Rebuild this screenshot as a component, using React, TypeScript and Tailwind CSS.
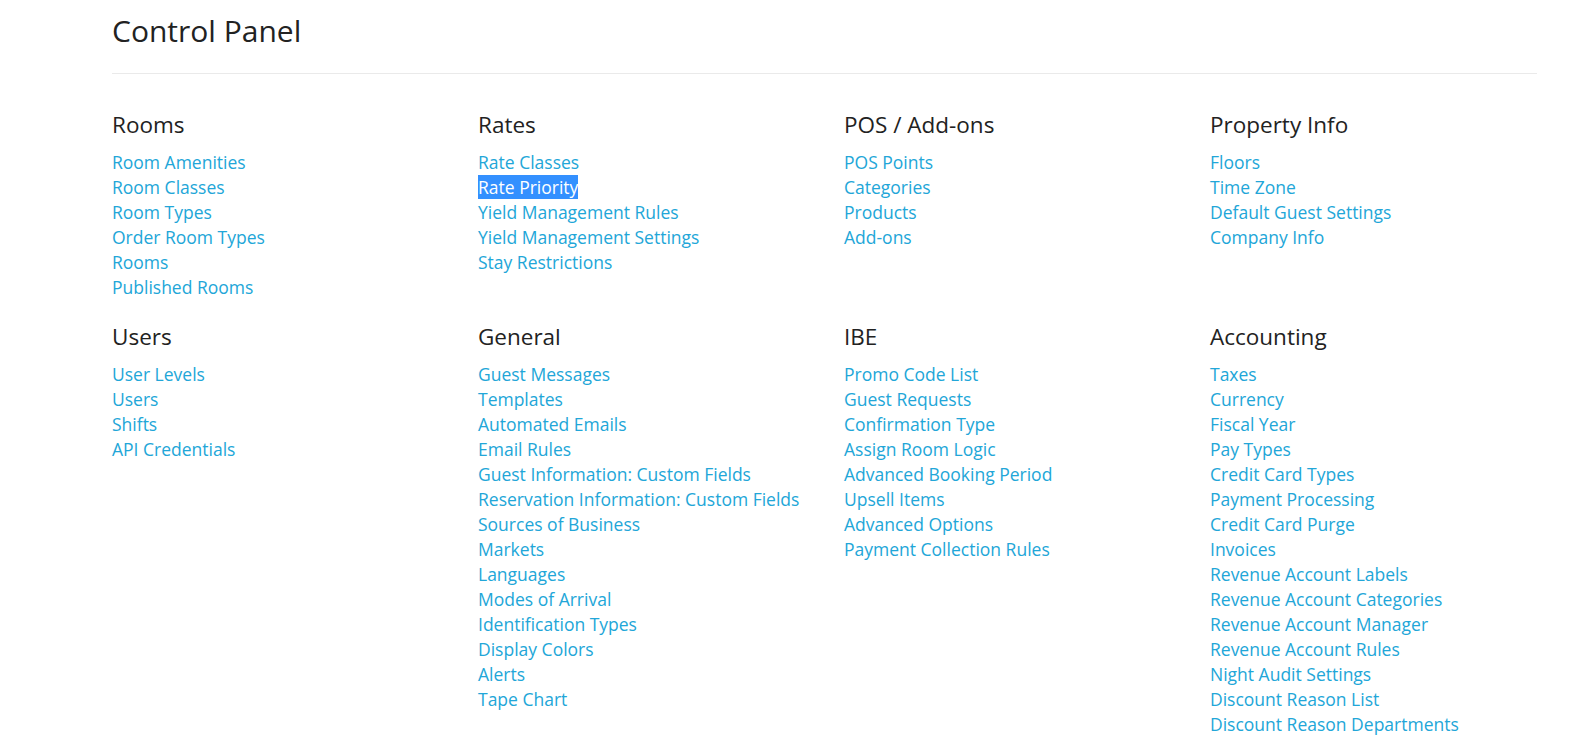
const sections: { title: string; links: string[] }[][] = [
  [
    {
      title: "Rooms",
      links: ["Room Amenities", "Room Classes", "Room Types", "Order Room Types", "Rooms", "Published Rooms"],
    },
    {
      title: "Rates",
      links: ["Rate Classes", "Rate Priority", "Yield Management Rules", "Yield Management Settings", "Stay Restrictions"],
    },
    { title: "POS / Add-ons", links: ["POS Points", "Categories", "Products", "Add-ons"] },
    { title: "Property Info", links: ["Floors", "Time Zone", "Default Guest Settings", "Company Info"] },
  ],
  [
    { title: "Users", links: ["User Levels", "Users", "Shifts", "API Credentials"] },
    {
      title: "General",
      links: [
        "Guest Messages",
        "Templates",
        "Automated Emails",
        "Email Rules",
        "Guest Information: Custom Fields",
        "Reservation Information: Custom Fields",
        "Sources of Business",
        "Markets",
        "Languages",
        "Modes of Arrival",
        "Identification Types",
        "Display Colors",
        "Alerts",
        "Tape Chart",
      ],
    },
    {
      title: "IBE",
      links: [
        "Promo Code List",
        "Guest Requests",
        "Confirmation Type",
        "Assign Room Logic",
        "Advanced Booking Period",
        "Upsell Items",
        "Advanced Options",
        "Payment Collection Rules",
      ],
    },
    {
      title: "Accounting",
      links: [
        "Taxes",
        "Currency",
        "Fiscal Year",
        "Pay Types",
        "Credit Card Types",
        "Payment Processing",
        "Credit Card Purge",
        "Invoices",
        "Revenue Account Labels",
        "Revenue Account Categories",
        "Revenue Account Manager",
        "Revenue Account Rules",
        "Night Audit Settings",
        "Discount Reason List",
        "Discount Reason Departments",
      ],
    },
  ],
];

function Section({ title, links }: { title: string; links: string[] }) {
  return (
    <div>
      <h3 className="mb-[10px] text-[22.5px] leading-[30px] text-[#222]">{title}</h3>
      <ul>
        {links.map((l) => (
          <li key={l} className="text-[17.5px] leading-[25px]">
            {l === "Rate Priority" ? (
              <a href="#" className="bg-[#3390ff] text-white">
                {l}
              </a>
            ) : (
              <a href="#" className="text-[#22a6d8] hover:underline">
                {l}
              </a>
            )}
          </li>
        ))}
      </ul>
    </div>
  );
}

export default function App() {
  return (
    <div className="min-h-screen bg-white font-['Open_Sans',sans-serif]">
      <div className="ml-[112px] w-[1425px] pt-[13px]">
        <h1 className="text-[30px] leading-[36px] text-[#222]">Control Panel</h1>
        <div className="mt-[24px] border-t border-[#eaeaea]" />
        <div className="mt-[36px] flex flex-col gap-[22px]">
          {sections.map((row, i) => (
            <div key={i} className="grid grid-cols-[366px_366px_366px_1fr]">
              {row.map((s) => (
                <Section key={s.title} title={s.title} links={s.links} />
              ))}
            </div>
          ))}
        </div>
      </div>
    </div>
  );
}
